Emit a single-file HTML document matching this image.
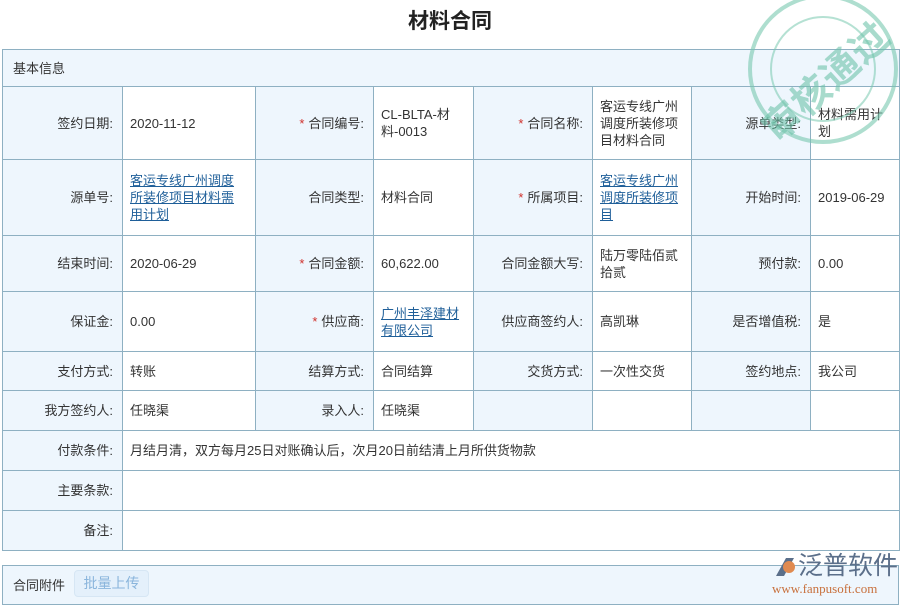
<!DOCTYPE html>
<html><head><meta charset="utf-8"><style>
*{margin:0;padding:0;box-sizing:border-box}
body{width:900px;height:600px;background:#fff;font-family:"Liberation Sans","Noto Sans CJK SC",sans-serif;font-size:13px;color:#333;position:relative;overflow:hidden}
h1{position:absolute;top:5px;left:0;width:900px;text-align:center;font-size:21px;font-weight:bold;color:#222}
table{position:absolute;left:2px;top:49px;border-collapse:collapse;table-layout:fixed;width:897px}
td{border:1px solid #8eb0c2;padding:0 7px;line-height:17px;vertical-align:middle;word-break:break-all}
td.l{background:#eef6fd;text-align:right;padding-right:9px}
td.v{background:#fff}
td.w{padding-right:18px}
td.hd{background:#eef6fd;padding-left:10px;text-align:left}
.s{color:#d0302b;margin-right:4px}
a{color:#1f5f99;text-decoration:underline}
.bot{position:absolute;left:2px;top:565px;width:897px;height:40px;border:1px solid #8eb0c2;background:#eef6fd}
.bot span{position:absolute;left:10px;top:9px}
.btn{position:absolute;left:71px;top:4px;width:75px;height:27px;border:1px solid #d6e6f4;border-radius:4px;background:#e4f0fb;color:#8ab5dc;text-align:center;line-height:25px;font-size:14px}
.stamp{position:absolute;left:748px;top:-6px;width:150px;height:150px;border-radius:50%;border:4px solid rgba(120,200,175,.6);}
.stamp .in{position:absolute;left:18px;top:18px;width:106px;height:106px;border-radius:50%;border:2px solid rgba(120,200,175,.55)}
.stamp .t{position:absolute;left:-8px;top:54px;width:160px;text-align:center;font-size:38px;font-weight:bold;color:rgba(110,195,170,.6);transform:rotate(-42deg);letter-spacing:1px}
.logo{position:absolute;left:770px;top:551px;width:130px}
.logo .a{font-size:25px;color:#5b6f8a;padding-left:28px;line-height:30px}
.logo .b{font-family:"Liberation Serif",serif;font-size:13px;color:#c8703c;padding-left:2px}
</style></head><body>
<h1>材料合同</h1>
<table>
<colgroup><col style="width:120px"><col style="width:133px"><col style="width:118px"><col style="width:100px"><col style="width:119px"><col style="width:99px"><col style="width:119px"><col style="width:89px"></colgroup>
<tr style="height:37px"><td class="hd" colspan="8">基本信息</td></tr>
<tr style="height:73px"><td class="l">签约日期:</td><td class="v">2020-11-12</td><td class="l"><span class="s">*</span>合同编号:</td><td class="v">CL-BLTA-材料-0013</td><td class="l"><span class="s">*</span>合同名称:</td><td class="v">客运专线广州调度所装修项目材料合同</td><td class="l">源单类型:</td><td class="v">材料需用计划</td></tr>
<tr style="height:76px"><td class="l">源单号:</td><td class="v w"><a>客运专线广州调度所装修项目材料需用计划</a></td><td class="l">合同类型:</td><td class="v">材料合同</td><td class="l"><span class="s">*</span>所属项目:</td><td class="v"><a>客运专线广州调度所装修项目</a></td><td class="l">开始时间:</td><td class="v">2019-06-29</td></tr>
<tr style="height:56px"><td class="l">结束时间:</td><td class="v">2020-06-29</td><td class="l"><span class="s">*</span>合同金额:</td><td class="v">60,622.00</td><td class="l">合同金额大写:</td><td class="v">陆万零陆佰贰拾贰</td><td class="l">预付款:</td><td class="v">0.00</td></tr>
<tr style="height:60px"><td class="l">保证金:</td><td class="v">0.00</td><td class="l"><span class="s">*</span>供应商:</td><td class="v"><a>广州丰泽建材有限公司</a></td><td class="l">供应商签约人:</td><td class="v">高凯琳</td><td class="l">是否增值税:</td><td class="v">是</td></tr>
<tr style="height:39px"><td class="l">支付方式:</td><td class="v">转账</td><td class="l">结算方式:</td><td class="v">合同结算</td><td class="l">交货方式:</td><td class="v">一次性交货</td><td class="l">签约地点:</td><td class="v">我公司</td></tr>
<tr style="height:40px"><td class="l">我方签约人:</td><td class="v">任晓渠</td><td class="l">录入人:</td><td class="v">任晓渠</td><td class="l"></td><td class="v"></td><td class="l"></td><td class="v"></td></tr>
<tr style="height:40px"><td class="l">付款条件:</td><td class="v" colspan="7">月结月清，双方每月25日对账确认后，次月20日前结清上月所供货物款</td></tr>
<tr style="height:40px"><td class="l">主要条款:</td><td class="v" colspan="7"></td></tr>
<tr style="height:40px"><td class="l">备注:</td><td class="v" colspan="7"></td></tr>
</table>
<div class="bot"><span>合同附件</span><div class="btn">批量上传</div></div>
<div class="stamp"><div class="in"></div><div class="t">审核通过</div></div>
<div class="logo"><div class="a">泛普软件</div><div class="b">www.fanpusoft.com</div>
<svg style="position:absolute;left:2px;top:5px" width="26" height="22" viewBox="0 0 26 22"><path d="M4 20 L14 2 L22 2 L12 20Z" fill="#5b6f8a"/><circle cx="17" cy="11" r="6" fill="#e08a50"/></svg></div>
</body></html>
